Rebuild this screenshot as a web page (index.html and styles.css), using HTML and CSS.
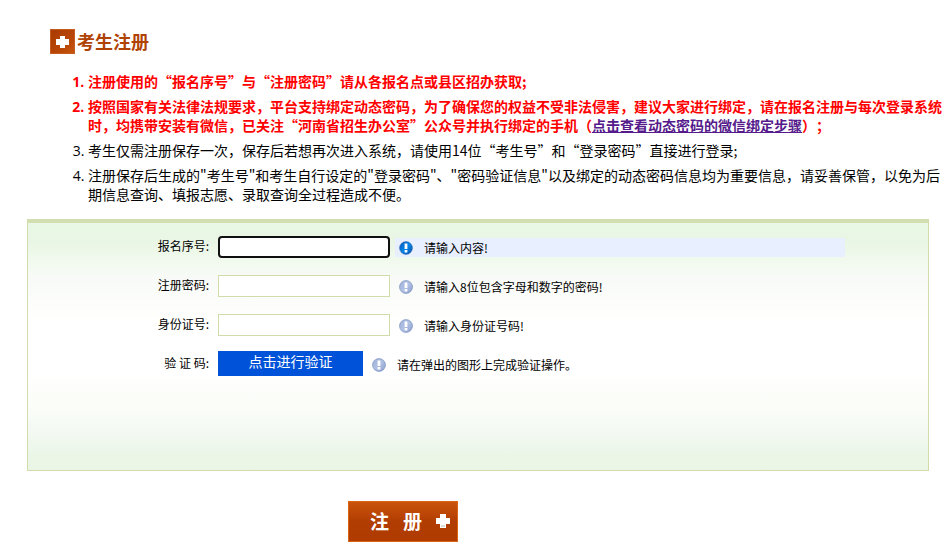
FILE: index.html
```html
<!DOCTYPE html>
<html lang="zh-CN">
<head>
<meta charset="utf-8">
<title>考生注册</title>
<link rel="stylesheet" href="styles.css">
</head>
<body>
<svg class="defs" aria-hidden="true">
  <defs>
    <linearGradient id="orange" x1="0" y1="0" x2="1" y2="1"><stop offset="0" stop-color="#a83a02"/><stop offset=".6" stop-color="#b84606"/><stop offset="1" stop-color="#c5560e"/></linearGradient>
    <linearGradient id="blue" x1="0" y1="0" x2="1" y2="1"><stop offset="0" stop-color="#0758b8"/><stop offset=".5" stop-color="#0784e6"/><stop offset="1" stop-color="#064fa8"/></linearGradient>
    <linearGradient id="pale" x1="0" y1="0" x2="1" y2="1"><stop offset="0" stop-color="#a3b3dc"/><stop offset=".5" stop-color="#afc0e3"/><stop offset="1" stop-color="#8f9fce"/></linearGradient>
    <symbol id="notice" viewBox="0 0 14 14">
      <circle cx="7" cy="7" r="6.5" stroke="#274f92" stroke-opacity=".35"/>
      <path d="M5.6 2.5h2.8v5.6H5.6zM5.6 9h2.8v2.4H5.6z" fill="#fff"/>
    </symbol>
  </defs>
</svg>
<main class="page">
  <h1 class="title">
    <svg class="title-icon" viewBox="0 0 25 25" aria-hidden="true">
      <rect x=".5" y=".5" width="24" height="24" fill="url(#orange)" stroke="#c65c20"/>
      <path d="M10 7h5v3h4v6h-4v3h-5v-3H6v-6h4z" fill="#fff"/>
    </svg>
    考生注册
  </h1>
  <ol class="notes">
    <li class="important">注册使用的“报名序号”与“注册密码”请从各报名点或县区招办获取;</li>
    <li class="important">按照国家有关法律法规要求，平台支持绑定动态密码，为了确保您的权益不受非法侵害，建议大家进行绑定，请在报名注册与每次登录系统时，均携带安装有微信，已关注“河南省招生办公室”公众号并执行绑定的手机（<a href="#">点击查看动态密码的微信绑定步骤</a>）；</li>
    <li>考生仅需注册保存一次，保存后若想再次进入系统，请使用14位“考生号”和“登录密码”直接进行登录;</li>
    <li>注册保存后生成的"考生号"和考生自行设定的"登录密码"、"密码验证信息"以及绑定的动态密码信息均为重要信息，请妥善保管，以免为后期信息查询、填报志愿、录取查询全过程造成不便。</li>
  </ol>
  <form>
    <div class="panel">
      <div class="row">
        <label for="serial">报名序号:</label>
        <input class="field current" id="serial" type="text">
        <p class="hint active"><svg class="hint-icon" fill="url(#blue)" aria-hidden="true"><use href="#notice"/></svg>请输入内容!</p>
      </div>
      <div class="row">
        <label for="password">注册密码:</label>
        <input class="field" id="password" type="password">
        <p class="hint"><svg class="hint-icon" fill="url(#pale)" aria-hidden="true"><use href="#notice"/></svg>请输入8位包含字母和数字的密码!</p>
      </div>
      <div class="row">
        <label for="idcard">身份证号:</label>
        <input class="field" id="idcard" type="text">
        <p class="hint"><svg class="hint-icon" fill="url(#pale)" aria-hidden="true"><use href="#notice"/></svg>请输入身份证号码!</p>
      </div>
      <div class="row">
        <label for="verify">验 证 码:</label>
        <button class="verify" id="verify" type="button">点击进行验证</button>
        <p class="hint"><svg class="hint-icon" fill="url(#pale)" aria-hidden="true"><use href="#notice"/></svg>请在弹出的图形上完成验证操作。</p>
      </div>
    </div>
    <div class="actions">
      <button class="submit" type="submit">
        <span>注</span><span>册</span>
        <svg class="submit-icon" viewBox="0 0 14 14" aria-hidden="true">
          <path d="M4 0h6v4h4v6h-4v4H4v-4H0V4h4z" fill="#fff"/>
          <path d="M5 11h4v2H5z" fill="#ddd"/>
        </svg>
      </button>
    </div>
  </form>
</main>
</body>
</html>
```
FILE: styles.css
```css
* {
  box-sizing: border-box;
}

body {
  margin: 0;
  background: #fff;
  color: #000;
  font-family: "Noto Sans CJK SC", sans-serif;
  font-size: 14px;
  line-height: 19px;
  text-spacing-trim: space-all;
}

.defs {
  position: absolute;
  width: 0;
  height: 0;
}

.page {
  padding: 29px 0 0 27px;
}

.title {
  display: flex;
  align-items: center;
  gap: 2px;
  margin: 0 0 18px 23px;
  color: #b04204;
  font-size: 18px;
  line-height: 25px;
}

.title-icon {
  width: 25px;
  height: 25px;
}

.notes {
  margin: 0 6px 15px 0;
  padding-left: 61px;
}

.notes li {
  margin-bottom: 6px;
}

.notes li::marker {
  font-family: "Open Sans", sans-serif;
}

.important {
  color: #f00;
  font-weight: bold;
}

.important a {
  color: #551a8b;
}

.panel {
  min-height: 252px;
  margin-right: 21px;
  padding-top: 13px;
  border: 1px solid #d0dcaa;
  border-top: 4px solid #d2deb0;
  background: linear-gradient(#e9f7e5, #eaf6e5 8%, #f2faef 16%, #f8faf7 22%, #fdfefb 34%, #fff 42%, #fff 60%, #fbfdf8 74%, #f4f9f4 84%, #ebf6e8 93%, #eaf5e4);
  font-size: 12px;
}

.row {
  display: flex;
  align-items: flex-start;
  height: 39px;
}

.row label {
  width: 181px;
  margin-right: 9px;
  text-align: right;
}

.field {
  width: 172px;
  height: 22px;
  padding: 0 4px;
  border: 1px solid #d0dcaa;
  background: #fff;
  font: inherit;
}

.current {
  border: 2px solid #101010;
  border-radius: 4px;
}

.hint {
  display: flex;
  flex: 0 1 450px;
  align-items: center;
  gap: 11px;
  height: 19px;
  margin: 2px 0 0 5px;
  padding-left: 4px;
}

.active {
  background: #e8efff;
}

.hint-icon {
  width: 14px;
  height: 14px;
}

.verify {
  width: 145px;
  height: 25px;
  margin-top: -2px;
  padding: 0 0 4px;
  border: 0;
  background: #0052d9;
  color: #fff;
  font: inherit;
  font-size: 14px;
}

.actions {
  padding: 30px 0 14px 321px;
}

.submit {
  display: flex;
  align-items: center;
  justify-content: flex-end;
  gap: 14px;
  width: 110px;
  height: 41px;
  padding: 0 7px 2px 0;
  border: 1px solid #dc6514;
  background: linear-gradient(#c9540c, #b23d02 50%, #b03b00);
  color: #fff;
  font: bold 19px "Noto Sans CJK SC", sans-serif;
}

.submit-icon {
  width: 14px;
  height: 14px;
}
```
